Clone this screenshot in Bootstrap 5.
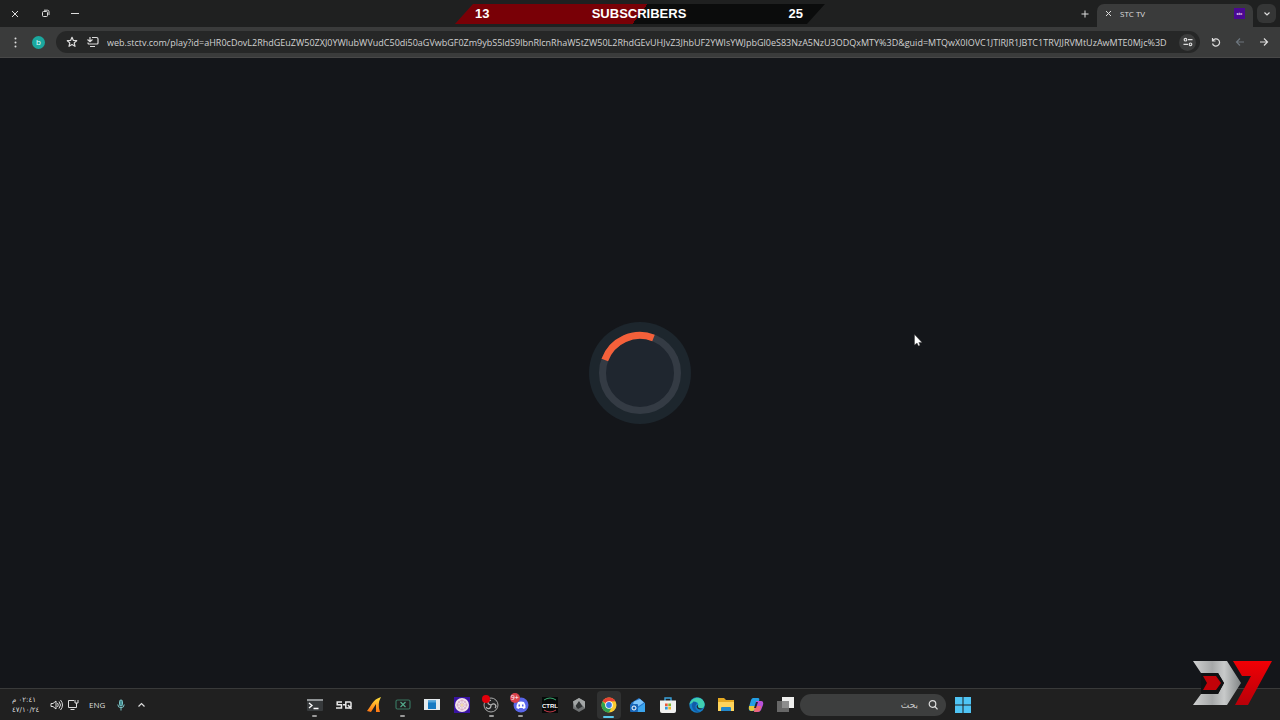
<!DOCTYPE html>
<html lang="en">
<head>
<meta charset="utf-8">
<meta name="viewport" content="width=device-width, initial-scale=1">
<title>STC TV</title>
<link href="https://cdn.jsdelivr.net/npm/bootstrap@5.3.0/dist/css/bootstrap.min.css" rel="stylesheet">
<style>
body{background:#14161a;color:#ddd;font-family:"Open Sans","Noto Sans","DejaVu Sans",sans-serif;font-size:9px;line-height:12px}
button{background:none;border:0;padding:0;color:inherit;display:flex;align-items:center;justify-content:center;flex:none}
svg{display:block;flex:none}
.line-icon{fill:none;stroke:currentColor;stroke-width:1.2}
.line-icon.thin{stroke-width:1}
.tabstrip{height:27px;background:#1f2020}
.win-btn{width:30px;height:27px}
.start-btn{width:34px}
.tab-active{width:156px;height:23px;background:#3a3b3b;border-radius:7px 7px 0 0}
.tab-title{font-size:8px}
.favicon{width:11px;height:11px;background:#4b0893;font-size:4px;line-height:11px;color:#eadcf7}
.tab-menu{width:19px;height:19px;background:#353636;border-radius:6px}
.toolbar{height:31px;background:#3a3b3b;border-bottom:1px solid #484848}
.avatar{width:13px;height:13px;background:#1ba89f;color:#e8ffff;font-size:8px;margin:0 11px 0 2px}
.omnibox{height:22px;background:#262727;border-radius:11px;padding:0 4px 0 10px}
.omnibox input{background:none;border:0;outline:0;color:#d2d2d2;padding:0;min-width:0;font-size:9px;height:20px}
.site-info{width:17px;height:17px;border-radius:9px;background:#3c3d3d}
.nav-btn{width:24px;height:24px}
.goal{top:4px;width:370px;height:20px;padding:0 22px 0 20px;color:#fff;font:bold 13px/20px "Liberation Sans",sans-serif;
 background:linear-gradient(127deg,#790006 0 50%,#0b0c0c 50%);clip-path:polygon(18px 0,100% 0,352px 100%,0 100%)}
.taskbar{height:32px;background:#202020;border-top:1px solid #393a3a}
.tray{left:12px;top:0;height:31px}
.tray-gap{margin-left:12px}
.lang{font-size:8px;margin-left:10px}
.clock{font:7px/10px "DejaVu Sans",sans-serif;width:34px}
.apps{display:grid;grid-template-columns:repeat(17,1fr);width:500px;height:31px}
.apps button{position:relative}
.open::after{content:"";position:absolute;bottom:3px;width:5px;height:2px;border-radius:1px;background:#999}
.current{background:#303131;border-radius:4px;margin:2px 3px 1px}
.current::after{bottom:1px;width:11px;background:#5ac8ed}
.count{left:4px;top:4px;min-width:10px;height:10px;border-radius:5px;background:#d9414c;color:#fff;font-size:7px;line-height:10px}
.rec{left:6px;top:6px;width:8px;height:8px;border-radius:4px;background:#e3000b}
.search{width:146px;height:22px;border-radius:11px;background:#3d3e3e}
.search input{background:none;border:0;outline:0;min-width:0;color:#ccc;font:9px/12px "DejaVu Sans",sans-serif}
.search input::placeholder{color:#c8c8c8;opacity:1}
.logo{right:8px;bottom:14px}
.pointer{left:914px;top:334px}
</style>
</head>
<body class="d-flex flex-column vh-100 overflow-hidden position-relative">
<header>
 <div class="tabstrip d-flex align-items-center">
  <button class="win-btn" aria-label="Close"><svg class="line-icon thin" width="8" height="8"><path d="M1 1l6 6M7 1L1 7"/></svg></button>
  <button class="win-btn" aria-label="Restore"><svg class="line-icon thin" width="9" height="9"><rect x="1.500" y="2.500" width="5" height="5" rx="1"/><path d="M3 1.200h3.500a1.500 1.500 0 0 1 1.500 1.500V6"/></svg></button>
  <button class="win-btn" aria-label="Minimize"><svg class="line-icon thin" width="8" height="8"><path d="M0 3.500h8"/></svg></button>
  <button class="nav-btn ms-auto" aria-label="New tab"><svg class="line-icon thin" width="8" height="8"><path d="M4 .5v7M.5 4h7"/></svg></button>
  <div class="tab-active d-flex align-items-center align-self-end ps-2 me-1">
   <button class="pb-1" aria-label="Close tab"><svg class="line-icon thin" width="7" height="7"><path d="M1 1l5 5M6 1L1 6"/></svg></button>
   <span class="tab-title ms-2 pb-1">STC TV</span>
   <span class="pb-1 ms-auto me-1 pe-1"><span class="favicon d-block text-center fw-bold">stc</span></span>
  </div>
  <button class="tab-menu me-1" aria-label="Search tabs"><svg class="line-icon" width="8" height="6"><path d="M1.500 1.500L4 4l2.500-2.500"/></svg></button>
 </div>
 <div class="toolbar d-flex align-items-center">
  <button class="win-btn" aria-label="Menu"><svg width="3" height="11" fill="currentColor"><circle cx="1.500" cy="1.500" r="1"/><circle cx="1.500" cy="5.500" r="1"/><circle cx="1.500" cy="9.500" r="1"/></svg></button>
  <button class="avatar rounded-circle" aria-label="Profile">b</button>
  <div class="omnibox d-flex align-items-center flex-grow-1 me-1">
   <button aria-label="Bookmark" class="me-2"><svg class="line-icon" width="12" height="12"><path d="M6 1.300l1.400 3.100 3.300.3-2.500 2.200.8 3.400L6 8.500l-3 1.800.8-3.400L1.300 4.700l3.300-.3z" stroke-linejoin="round"/></svg></button>
   <button aria-label="Install app" class="me-2"><svg class="line-icon" width="13" height="12"><path d="M6 1.500h4.500a1.500 1.500 0 0 1 1.500 1.500v4a1 1 0 0 1-1 1H3a1 1 0 0 1-1-1V6.500M4 10.500h5M4 1v4.500M1.500 3.500L4 5.800l2.500-2.300"/></svg></button>
   <input class="flex-grow-1" type="text" aria-label="Address" spellcheck="false" value="web.stctv.com/play?id=aHR0cDovL2RhdGEuZW50ZXJ0YWlubWVudC50di50aGVwbGF0Zm9ybS5ldS9lbnRlcnRhaW5tZW50L2RhdGEvUHJvZ3JhbUF2YWlsYWJpbGl0eS83NzA5NzU3ODQxMTY%3D&amp;guid=MTQwX0lOVC1JTlRJR1JBTC1TRVJJRVMtUzAwMTE0Mjc%3D">
   <button class="site-info" aria-label="Site information"><svg class="line-icon" width="10" height="10"><circle cx="2.500" cy="2.700" r="1.300"/><path d="M5 2.700h4.500M.5 7.300H5"/><circle cx="7.500" cy="7.300" r="1.300"/></svg></button>
  </div>
  <button class="nav-btn" aria-label="Reload"><svg class="line-icon" width="10" height="10"><path d="M1.500 1v3h3M1.800 3.800A3.600 3.600 0 1 1 1.500 6.500"/></svg></button>
  <button class="nav-btn text-secondary" aria-label="Back"><svg class="line-icon" width="10" height="10"><path d="M9 5H1.500M5 1.500L1.500 5 5 8.500"/></svg></button>
  <button class="nav-btn me-1" aria-label="Forward"><svg class="line-icon" width="10" height="10"><path d="M1 5h7.500M5 1.500L8.500 5 5 8.500"/></svg></button>
 </div>
</header>
<div class="goal position-absolute start-50 translate-middle-x d-flex justify-content-between"><span>13</span><span>SUBSCRIBERS</span><span>25</span></div>

<main class="flex-grow-1 d-flex align-items-center justify-content-center">
 <svg width="102" height="102" viewBox="-51 -51 102 102" role="img" aria-label="Loading"><circle r="51" fill="#1d262d"/><circle r="37.500" fill="#1f262f" stroke="#343b44" stroke-width="7"/><path d="M-35.200-13A37.500 37.500 0 0 1 13.500-35" fill="none" stroke="#f4603a" stroke-width="7"/></svg>
</main>

<footer class="taskbar position-relative d-flex justify-content-center">
 <div class="tray position-absolute d-flex align-items-center">
  <div class="clock text-nowrap"><div><bdo dir="ltr">م ٠٢:٤١</bdo></div><div><bdo dir="ltr">٤٧/١٠/٢٤</bdo></div></div>
  <button class="ms-1" aria-label="Volume"><svg class="line-icon thin" width="13" height="12"><path d="M1 4.500h2L6 2v8L3 7.500H1zM7.500 4q1.500 2 0 4M9 2.500q3 3.500 0 7M10.500 1q4 5 0 10"/></svg></button>
  <button class="ms-1" aria-label="Network"><svg class="line-icon thin" width="12" height="12"><path d="M7 1.500H1.500v7h8V6M3.500 10.500h4M8 1v3h3V1M9.500 4v2"/></svg></button>
  <button class="lang" aria-label="Language">ENG</button>
  <button class="tray-gap" aria-label="Microphone"><svg width="8" height="12" fill="none" stroke="#7bc4c6"><rect x="2.500" y="1" width="3" height="6" rx="1.500" fill="#468f93"/><path d="M.8 5.500a3.200 3.200 0 0 0 6.400 0M4 9v2.500"/></svg></button>
  <button class="tray-gap" aria-label="Hidden icons"><svg class="line-icon" width="9" height="6"><path d="M1.500 4.500L4.500 1.500l3 3"/></svg></button>
 </div>
 <div class="apps">
  <button class="open" aria-label="Terminal"><svg width="16" height="14"><rect y="1" width="16" height="12" rx="1" fill="#373a3c"/><path d="M0 1h16v2H0z" fill="#909395"/><path d="M2 5l3 2.500L2 10M6.500 10.500h5" stroke="#fff" stroke-width="1.300" fill="none"/></svg></button>
  <button aria-label="SteelSeries"><svg width="16" height="10" fill="none" stroke="#e9e9e9" stroke-width="1.500"><path d="M6 2H1.200v2.700h4.300V8H0M7 4.800h3M14 8H9.800V2H14q1 0 1 1v4q0 1-1 1M12 5l3.500 4"/></svg></button>
  <button aria-label="Editor"><svg width="16" height="16"><defs><linearGradient id="fire" x2="0" y2="1"><stop stop-color="#ffe33c"/><stop offset="1" stop-color="#ff7412"/></linearGradient></defs><path d="M15 0C6 3 6 8 1 14l4 1 5-8v8h4Q11 7 15 0z" fill="url(#fire)"/></svg></button>
  <button class="open" aria-label="Spreadsheet tool"><svg width="16" height="12" fill="none" stroke="#38745f" stroke-width="1.200"><rect x="1" y="1" width="14" height="9" rx="1.500"/><path d="M5.500 3l5 5M10.500 3l-5 5" stroke="#53a98a"/></svg></button>
  <button aria-label="Window app"><svg width="16" height="13"><path d="M0 1h16v11H0z" fill="#e4eaed"/><path d="M4 2.500h8V11H4z" fill="#167ac2"/><path d="M4 2.500h8v2H4z" fill="#50a5db"/></svg></button>
  <button aria-label="Game"><svg width="16" height="16"><path d="M0 0h16v16H0z" fill="#3913a2"/><circle cx="8" cy="8" r="7" fill="#f2e4ea"/><circle cx="8" cy="8" r="4.500" fill="none" stroke="#cf9bb8" stroke-width=".7"/><path d="M8 2v12M2 8h12M4 4l8 8M12 4l-8 8" stroke="#d3a9c3" stroke-width=".7"/><circle cx="8" cy="8" r="1.500" fill="#efd9a9"/></svg></button>
  <button class="open" aria-label="Recorder"><svg width="16" height="16"><circle cx="8" cy="8" r="7" fill="#242526" stroke="#aaa"/><path d="M8 8C3 7 5 3 8 3.500M8 8c4-3 6 1 4 3M8 8c0 5-4 4-5 2" fill="none" stroke="#b5b5b5" stroke-width="1.200"/></svg><span class="rec position-absolute"></span></button>
  <button class="open" aria-label="Chat"><svg width="16" height="16"><circle cx="8" cy="8" r="7.500" fill="#5965e8"/><path d="M5 5q3-1 6 0 2 3 1.500 6l-2 1-1-1h-3l-1 1-2-1Q3 8 5 5z" fill="#fff"/><path d="M5.500 7.500h1.500v2H5.500zm3.500 0h1.500v2H9z" fill="#5965e8"/></svg><span class="count position-absolute">9+</span></button>
  <button aria-label="Ctrl"><svg width="16" height="16"><path d="M0 0h16v16H0z" fill="#060909"/><path d="M2 3q6-4 12 0" stroke="#38a96f" fill="none"/><path d="M2 13q6 4 12 0" stroke="#c33c4a" fill="none"/><text x="8" y="10.500" text-anchor="middle" fill="#fff" font-family="Liberation Sans" font-size="6" font-weight="bold">CTRL</text></svg></button>
  <button aria-label="Gem"><svg width="14" height="16"><path d="M7 1l6 3.500v7L7 15l-6-3.500v-7z" fill="#6e7172"/><path d="M7 1L1 4.500 3 11l4-6 6 6V4.500z" fill="#a3a6a6"/><path d="M7 4l3.500 5.500L6 12 3.500 9z" fill="#303334"/></svg></button>
  <button class="open current" aria-label="Chrome"><svg width="16" height="16" viewBox="-8 -8 16 16"><circle r="7.500" fill="#f9ca2e"/><path d="M0 0L-6.500-3.750A7.500 7.500 0 0 1 6.500-3.750L0-3.500z" fill="#e64235"/><path d="M0 3.500L-6.500-3.750A7.500 7.500 0 0 0 0 7.500L3 1.750z" fill="#30a350"/><circle r="3.800" fill="#fff"/><circle r="2.900" fill="#397de6"/></svg></button>
  <button aria-label="Outlook"><svg width="16" height="16"><path d="M1 6l8-5 6 5v9H3z" fill="#2477cd"/><path d="M4 4.500l6-2.500 4 3.500-6 4-5-3z" fill="#7cc4fa"/><path d="M2 15l13-9v9z" fill="#3ba5ee"/><rect y="7" width="8" height="8" rx="1" fill="#1765b6"/><circle cx="4" cy="11" r="2" fill="none" stroke="#fff"/></svg></button>
  <button aria-label="Store"><svg width="16" height="16"><path d="M5 4V1h6v3" fill="none" stroke="#3aa2dc" stroke-width="1.400"/><path d="M0 3.500h16V14q0 2-2 2H2q-2 0-2-2z" fill="#f0f0ef"/><path d="M5 6.500h2.700v2.700H5z" fill="#ec5834"/><path d="M8.300 6.500H11v2.700H8.300z" fill="#79b833"/><path d="M5 9.800h2.700v2.700H5z" fill="#3099dc"/><path d="M8.300 9.800H11v2.700H8.300z" fill="#f1b52b"/></svg></button>
  <button aria-label="Edge"><svg width="16" height="16"><circle cx="8" cy="8" r="7.700" fill="#147fc9"/><path d="M.4 7.500C2-1 14-2 15.700 7q0 5-5.200 4-3-1-1-3.500Q8 2 .4 7.500z" fill="#40cfb1"/><path d="M4 5C1 10 5 16 11 15 6 13 5 9 8 6.500 7 5 5 4 4 5z" fill="#125ba7"/><path d="M9 8q-1 4 5 3.500-3 2-5.500 0Q6.500 9 9 8" fill="#202c32"/></svg></button>
  <button aria-label="Files"><svg width="16" height="15"><path d="M0 1h6l2 2h8v11H0z" fill="#e6a922"/><path d="M0 5h16v9H0z" fill="#ffd45b"/><path d="M3 14v-3q0-1 1-1h8q1 0 1 1v3z" fill="#2388ca"/></svg></button>
  <button aria-label="Copilot"><svg width="16" height="16"><path d="M5 1h5q2 0 1 3L9 11q-1 3-3 3H3q-3 0-2-4l2-7q1-2 2-2" fill="#239fe5"/><path d="M1 9h7l-1 3q-1 2-3 2-4 0-3-5" fill="#e4c83c"/><path d="M8 4h5q3 0 2 4l-2 5q-1 2-3 2H6q2-1 3-4z" fill="#b951d9"/><path d="M7 9h6l-1 5q-2 1-6 1z" fill="#f06874"/><path d="M8 5L6 11h2l2-6z" fill="#252637"/></svg></button>
  <button aria-label="Task view"><svg width="17" height="15"><path d="M5 0h12v11H5z" fill="#eeeeed"/><path d="M0 4h12v11H0z" fill="#777" opacity=".82"/></svg></button>
 </div>
 <label class="search d-flex align-items-center align-self-center px-2"><input class="flex-grow-1" dir="rtl" type="search" aria-label="بحث" placeholder="بحث"><svg class="line-icon ms-2" width="10" height="10"><circle cx="4.500" cy="4" r="3.300"/><path d="M7 6.500L9.500 9.300"/></svg></label>
 <button class="start-btn align-self-center" aria-label="Start"><svg width="16" height="16" fill="#4fc4f4"><path d="M0 0h7.500v7.500H0zm8.500 0H16v7.500H8.500zM0 8.500h7.500V16H0zm8.500 0H16V16H8.500z"/></svg></button>
</footer>

<svg class="logo position-absolute" width="80" height="45" viewBox="0 0 80 45" role="img" aria-label="D7"><defs><linearGradient id="steel"><stop stop-color="#d0d1d1"/><stop offset=".4" stop-color="#a5a7a8"/><stop offset=".65" stop-color="#c8caca"/><stop offset="1" stop-color="#818586"/></linearGradient><linearGradient id="red" x2="0" y2="1"><stop stop-color="#f10005"/><stop offset="1" stop-color="#b80009"/></linearGradient></defs><path d="M1 0h34l14 22-14 22H1l8-11h17l6-11-6-10H9z" fill="url(#steel)"/><path d="M9 12h17l6 10-6 11H9z" fill="#101113"/><path d="M11 15h13l5 7-5 7H11l4-7z" fill="#c20208"/><path d="M41 0h39L56 44H43l16-29H50z" fill="url(#red)"/></svg>
<svg class="pointer position-absolute" width="9" height="14" aria-hidden="true"><path d="M.5.500v10.500l2.500-2L4.500 12l1.500-.7L4.800 8.500H8z" fill="#fff" stroke="#333" stroke-width=".4"/></svg>
<script src="https://cdn.jsdelivr.net/npm/bootstrap@5.3.0/dist/js/bootstrap.bundle.min.js"></script>
</body>
</html>
